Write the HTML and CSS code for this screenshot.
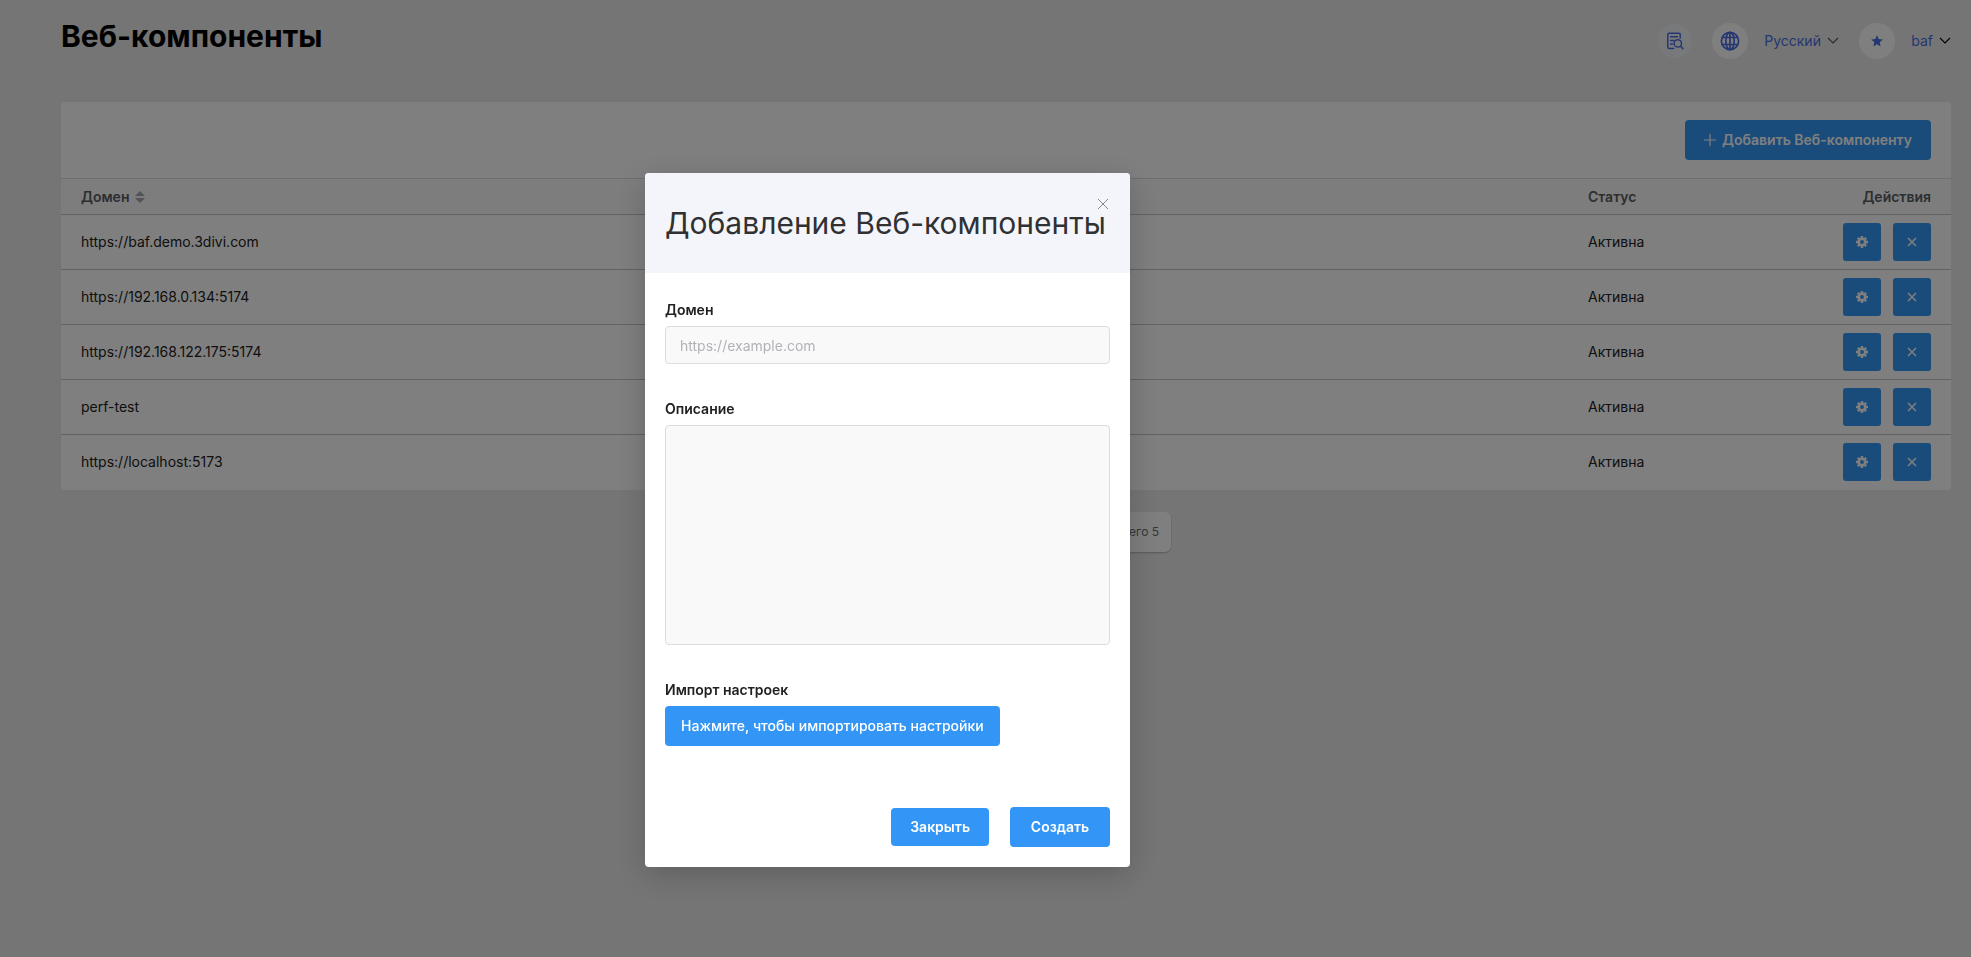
FILE: index.html
```
<!DOCTYPE html>
<html lang="ru">
<head>
  <meta charset="UTF-8">
  <meta name="viewport" content="width=device-width, initial-scale=1.0">
  <title>Веб-компоненты</title>
  <link rel="stylesheet" href="styles.css">
</head>
<body>
  <div class="page">
    <header class="header">
      <h1 class="page-title">Веб-компоненты</h1>
      <div class="header-tools">
        <button class="round-btn docs-btn" type="button" aria-label="Журнал">
          <svg width="18" height="18" viewBox="0 0 18 18" fill="none" stroke="currentColor" stroke-width="1.5" stroke-linecap="round">
            <path d="M14.2 6V2.6a1.4 1.4 0 0 0-1.4-1.4H3.2a1.4 1.4 0 0 0-1.4 1.4v12.6a1.4 1.4 0 0 0 1.4 1.4h4.4"/>
            <path d="M4.6 4.8h6.8M4.6 8.4h3M4.6 12h1.8"/>
            <circle cx="11.8" cy="11.4" r="3.7"/>
            <path d="M14.5 14.2l2.4 2.4"/>
          </svg>
        </button>
        <div class="language">
          <label class="round-btn" for="language" aria-label="Язык">
            <svg width="20" height="20" viewBox="0 0 20 20" fill="none" stroke="currentColor" stroke-width="1.7">
              <circle cx="10" cy="10" r="8.6"/>
              <ellipse cx="10" cy="10" rx="4.2" ry="8.6"/>
              <path d="M10 1.4v17.2M2.4 6.5h15.2M2.4 13.5h15.2"/>
            </svg>
          </label>
          <span class="select-wrap">
            <select class="language-select" id="language">
              <option>Русский</option>
            </select>
            <svg width="12" height="8" viewBox="0 0 12 8" fill="none" stroke="#555" stroke-width="1.1"><path d="M1 1l5 5 5-5"/></svg>
          </span>
        </div>
        <button class="user-btn" type="button">
          <span class="round-btn">
            <svg width="12" height="12" viewBox="0 0 12 12" fill="currentColor"><path d="M6 0.2l1.7 3.8 4.1.4-3.1 2.8.9 4.3L6 9.3l-3.6 2.2.9-4.3L.2 4.4 4.3 4z"/></svg>
          </span>
          <span class="user-name">baf
            <svg width="12" height="8" viewBox="0 0 12 8" fill="none" stroke="#000" stroke-width="1.1"><path d="M1 1l5 5 5-5"/></svg>
          </span>
        </button>
      </div>
    </header>

    <main class="card">
      <div class="toolbar">
        <button class="btn add-btn" type="button">
          <svg width="12" height="12" viewBox="0 0 12 12" stroke="currentColor" stroke-width="1.2"><path d="M6 0v12M0 6h12"/></svg>
          Добавить Веб-компоненту
        </button>
      </div>
      <table class="table">
        <thead>
          <tr>
            <th class="col-domain">Домен
              <svg class="sort" width="10" height="12" viewBox="0 0 10 12" fill="#a5a7ad"><path d="M0 5l5-5 5 5zM0 7h10l-5 5z"/></svg>
            </th>
            <th class="col-status">Статус</th>
            <th class="col-actions">Действия</th>
          </tr>
        </thead>
        <tbody id="rows"></tbody>
      </table>
    </main>

    <div class="pagination">
      <span class="pagination-total">Всего 5</span>
    </div>
  </div>

  <div class="overlay">
    <form class="modal" role="dialog" aria-modal="true" aria-labelledby="modalTitle">
      <div class="modal-header">
        <h2 class="modal-title" id="modalTitle">Добавление Веб-компоненты</h2>
        <button class="modal-close" type="button" aria-label="Закрыть">
          <svg width="12" height="12" viewBox="0 0 12 12" stroke="currentColor" stroke-width="1"><path d="M1 1l10 10M11 1L1 11"/></svg>
        </button>
      </div>
      <div class="modal-body">
        <div class="field">
          <label for="domain">Домен</label>
          <input class="input" id="domain" type="text" placeholder="https://example.com">
        </div>
        <div class="field">
          <label for="description">Описание</label>
          <textarea class="input textarea" id="description"></textarea>
        </div>
        <div class="field">
          <label for="import">Импорт настроек</label>
          <button class="btn import-btn" id="import" type="button">Нажмите, чтобы импортировать настройки</button>
        </div>
      </div>
      <div class="modal-footer">
        <button class="btn close-btn" type="button">Закрыть</button>
        <button class="btn submit-btn" type="submit">Создать</button>
      </div>
    </form>
  </div>

  <script>
    const domains = [
      "https://baf.demo.3divi.com",
      "https://192.168.0.134:5174",
      "https://192.168.122.175:5174",
      "perf-test",
      "https://localhost:5173"
    ];

    const gear = '<svg width="12" height="12" viewBox="0 0 12 12"><circle cx="6" cy="6" r="3.2" fill="none" stroke="currentColor" stroke-width="2.6"/><path d="M6 0v2M6 10v2M0 6h2M10 6h2M1.8 1.8l1.4 1.4M8.8 8.8l1.4 1.4M10.2 1.8L8.8 3.2M3.2 8.8l-1.4 1.4" stroke="currentColor" stroke-width="2.4"/></svg>';
    const cross = '<svg width="10" height="10" viewBox="0 0 10 10" stroke="currentColor" stroke-width="1.5"><path d="M1 1l8 8M9 1L1 9"/></svg>';

    document.getElementById("rows").innerHTML = domains.map(domain => `
      <tr>
        <td>${domain}</td>
        <td>Активна</td>
        <td class="actions">
          <div class="actions-list">
            <button class="icon-btn" type="button" aria-label="Настройки">${gear}</button>
            <button class="icon-btn" type="button" aria-label="Удалить">${cross}</button>
          </div>
        </td>
      </tr>`).join("");
  </script>
</body>
</html>
```
FILE: styles.css
```
* {
  box-sizing: border-box;
}

body {
  margin: 0;
  background-color: #ebebeb;
  color: #212121;
  font-family: Inter, sans-serif;
  font-size: 14px;
  line-height: 20px;
}

button, input, select, textarea {
  font: inherit;
}

button {
  cursor: pointer;
}

.page {
  padding: 16px 20px 20px 61px;
}

/* Header */
.header {
  display: flex;
  justify-content: space-between;
  align-items: flex-start;
  height: 86px;
}

.page-title {
  margin: 0;
  font-size: 30px;
  line-height: 40px;
  font-weight: 700;
  color: #000;
}

.header-tools {
  display: flex;
  align-items: center;
  gap: 20px;
  padding-top: 7px;
  color: #4a6ee0;
}

.round-btn {
  display: flex;
  align-items: center;
  justify-content: center;
  width: 36px;
  height: 36px;
  padding: 0;
  border: none;
  border-radius: 50%;
  background-color: #fff;
  color: #4a6ee0;
}

.docs-btn {
  width: 34px;
  height: 34px;
  background-color: #f1f2f7;
}

.language, .user-btn {
  display: flex;
  align-items: center;
  gap: 16px;
}

.select-wrap, .user-name {
  display: flex;
  align-items: center;
  gap: 6px;
}

.language-select {
  appearance: none;
  padding: 0;
  border: none;
  background: none;
  color: #4a6ee0;
}

.user-btn {
  padding: 0;
  border: none;
  background: none;
  color: #4a6ee0;
}

/* Table */
.card {
  background-color: #fff;
  border-radius: 4px;
}

.toolbar {
  display: flex;
  justify-content: flex-end;
  padding: 18px 20px;
}

.btn {
  display: flex;
  align-items: center;
  justify-content: center;
  gap: 6px;
  height: 40px;
  padding: 0 19px;
  border: none;
  border-radius: 4px;
  background-color: #3396f6;
  color: #fff;
  font-weight: 600;
}

.table {
  width: 100%;
  border-collapse: collapse;
  table-layout: fixed;
}

.table th {
  height: 36px;
  padding: 0 20px;
  border-top: 1px solid #dcdcdc;
  border-bottom: 1px solid #c4c6c9;
  background-color: #fafafa;
  color: #5a5c60;
  font-weight: 600;
  text-align: left;
}

.table td {
  height: 55px;
  padding: 0 20px;
  border-bottom: 1px solid #c4c6c9;
}

.table tbody tr:last-child td {
  border-bottom: none;
}

.col-status {
  width: 10%;
}

.table .col-actions {
  width: 194px;
  text-align: right;
}

.sort {
  margin-left: 2px;
  vertical-align: -1px;
}

.actions-list {
  display: flex;
  justify-content: flex-end;
  gap: 12px;
}

.icon-btn {
  display: flex;
  align-items: center;
  justify-content: center;
  width: 38px;
  height: 38px;
  padding: 0;
  border: none;
  border-radius: 3px;
  background-color: #3396f6;
  color: #fff;
}

.pagination {
  display: flex;
  align-items: center;
  justify-content: flex-end;
  width: 330px;
  height: 40px;
  margin: 22px auto 0;
  padding: 0 12px;
  border-radius: 6px;
  background-color: #fff;
  box-shadow: 0 1px 2px rgba(0,0,0,0.25);
  color: #6b6d72;
  font-size: 12px;
}

/* Modal */
.overlay {
  position: fixed;
  top: 0;
  right: 0;
  bottom: 0;
  left: 0;
  display: flex;
  align-items: flex-start;
  justify-content: center;
  padding: 173px 196px 40px 0;
  overflow: auto;
  background-color: rgba(0,0,0,0.5);
}

.modal {
  width: 485px;
  border-radius: 4px;
  background-color: #fff;
  box-shadow: 0 8px 32px rgba(0,0,0,0.2);
}

.modal-header {
  position: relative;
  padding: 30px 20px;
  border-radius: 4px 4px 0 0;
  background-color: #f4f5fa;
}

.modal-title {
  margin: 0;
  font-size: 30px;
  line-height: 40px;
  font-weight: 400;
  color: #303133;
  white-space: nowrap;
}

.modal-close {
  position: absolute;
  top: 20px;
  right: 16px;
  display: flex;
  padding: 5px;
  border: none;
  background: none;
  color: #85878c;
}

.modal-body {
  display: flex;
  flex-direction: column;
  gap: 35px;
  padding: 27px 20px 61px;
}

.field {
  display: flex;
  flex-direction: column;
  align-items: flex-start;
  gap: 6px;
}

.field label {
  font-weight: 600;
}

.input {
  width: 100%;
  height: 38px;
  padding: 0 14px;
  border: 1px solid #dcdcdc;
  border-radius: 4px;
  background-color: #f9f9f9;
  color: #212121;
}

.input::placeholder {
  color: #b0b2b7;
}

.textarea {
  display: block;
  height: 220px;
  padding: 8px 14px;
  resize: none;
}

.import-btn {
  padding: 0 16px;
  font-weight: 500;
}

.modal-footer {
  display: flex;
  align-items: center;
  justify-content: flex-end;
  gap: 21px;
  padding: 0 20px 20px;
}

.close-btn {
  height: 38px;
}

.submit-btn {
  min-width: 100px;
}
```
